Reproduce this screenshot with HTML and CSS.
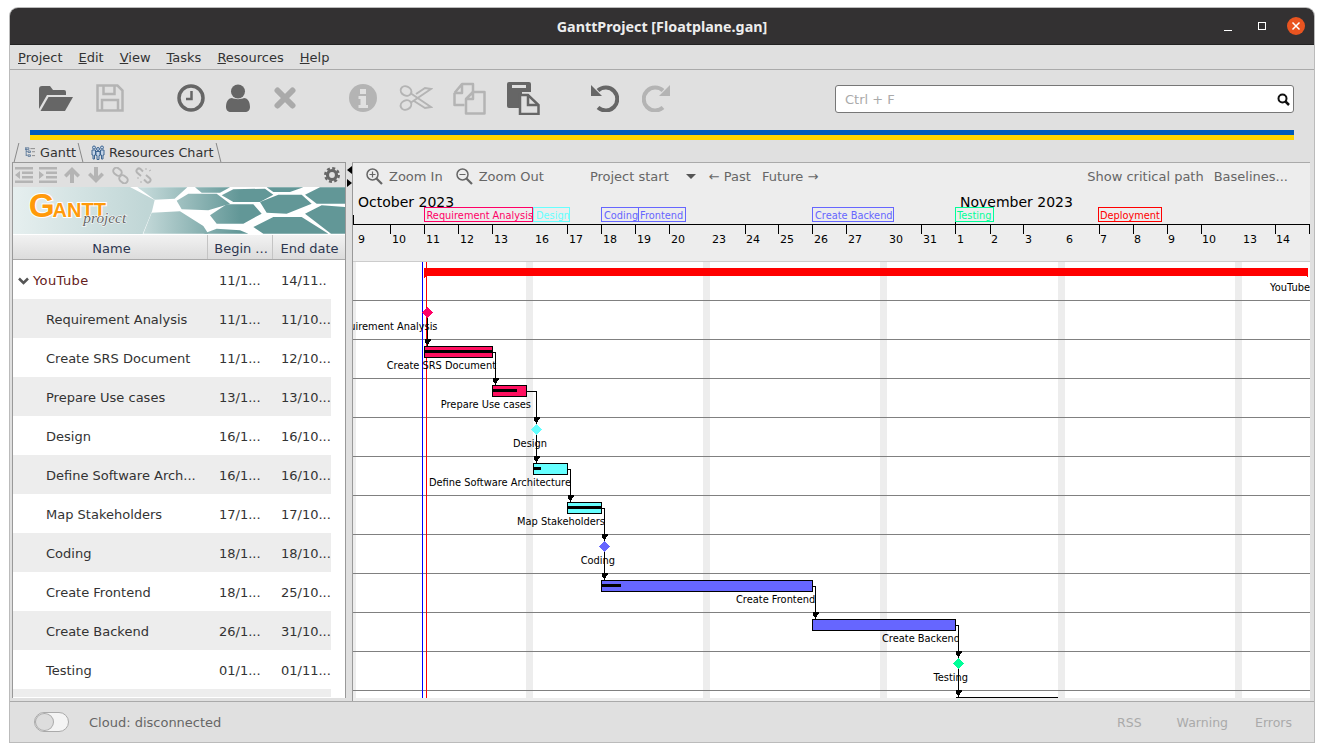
FILE: index.html
```html
<!DOCTYPE html>
<html lang="en">

<head>
    <meta charset="UTF-8">
    <title>GanttProject [Floatplane.gan]</title>
    <link rel="stylesheet" href="styles.css">
</head>

<body>
    <div class="window">
        <div class="titlebar">
            <span></span>
            <span class="title">GanttProject [Floatplane.gan]</span>
            <div class="win-btns">
                <span class="win-min"></span>
                <span class="win-max"></span>
                <svg class="win-close" width="18" height="18" viewBox="0 0 18 18">
                    <circle cx="9" cy="9" r="9" fill="#e95420" />
                    <path d="M5.5 5.5l7 7M12.5 5.5l-7 7" stroke="#fff" stroke-width="1.5" />
                </svg>
            </div>
        </div>

        <div class="menubar">
            <span><u>P</u>roject</span>
            <span><u>E</u>dit</span>
            <span><u>V</u>iew</span>
            <span><u>T</u>asks</span>
            <span><u>R</u>esources</span>
            <span><u>H</u>elp</span>
        </div>

        <div class="toolbar">
            <div class="tools file-tools">
                <div class="tool">
                    <svg width="34" height="25" viewBox="0 0 34 25" fill="#666">
                        <path d="M0 23V3a3 3 0 0 1 3-3h8l3 4h11a2 2 0 0 1 2 2v3H8z" />
                        <path d="M1.500 25L9.500 11H34l-8 14z" />
                    </svg>
                </div>
                <div class="tool">
                    <svg width="28" height="28" viewBox="0 0 28 28" fill="none" stroke="#b4b4b4" stroke-width="2.500">
                        <path d="M1.500 1.500h20l5 5v20h-25z" />
                        <path d="M7.500 2v8h11V2M6 26V16h16v10" />
                    </svg>
                </div>
            </div>
            <div class="tools task-tools">
                <div class="tool">
                    <svg width="28" height="28" viewBox="0 0 28 28" fill="none" stroke="#666">
                        <circle cx="14" cy="14" r="12" stroke-width="3.500" />
                        <path d="M14.500 7v8H9" stroke-width="2.500" />
                    </svg>
                </div>
                <div class="tool">
                    <svg width="24" height="28" viewBox="0 0 24 28" fill="#666">
                        <circle cx="12" cy="7.500" r="7" />
                        <path d="M0 23c0-6 3-9 6-9 2 1.500 10 1.500 12 0 3 0 6 3 6 9 0 3-2 5-5 5H5c-3 0-5-2-5-5z" />
                    </svg>
                </div>
                <div class="tool">
                    <svg width="22" height="22" viewBox="0 0 22 22" stroke="#aaa" stroke-width="6" stroke-linecap="round">
                        <path d="M3.500 3.500l15 15M18.500 3.500l-15 15" />
                    </svg>
                </div>
            </div>
            <div class="tools edit-tools">
                <div class="tool">
                    <svg width="28" height="28" viewBox="0 0 28 28">
                        <circle cx="14" cy="14" r="14" fill="#b4b4b4" />
                        <path d="M11 5h6v5h-6zM9.500 12h7.500v9h2v3H9.500v-3h2v-6h-2z" fill="#e0e0e0" />
                    </svg>
                </div>
                <div class="tool">
                    <svg width="34" height="28" viewBox="0 0 34 28" fill="none" stroke="#b4b4b4" stroke-width="2">
                        <ellipse cx="7" cy="7" rx="5.500" ry="4.500" transform="rotate(25 7 7)" />
                        <ellipse cx="7" cy="21" rx="5.500" ry="4.500" transform="rotate(-25 7 21)" />
                        <path d="M12 9.500L32 23l-6 1-11-7M12 18.500L32 5l-6-1-9 6" />
                    </svg>
                </div>
                <div class="tool">
                    <svg width="33" height="33" viewBox="0 0 33 33" fill="none" stroke="#b4b4b4" stroke-width="2.500" stroke-linejoin="round">
                        <path d="M1.500 11L9 2h11v8M1.500 11v12h10M1.500 11H9V2" />
                        <path d="M13 17l7-7h11.500v21.500H13zM13 17h7v-7" fill="#e0e0e0" />
                    </svg>
                </div>
                <div class="tool">
                    <svg width="33" height="33" viewBox="0 0 33 33">
                        <path d="M2 0h20a2 2 0 0 1 2 2v8H15v16H2a2 2 0 0 1-2-2V2a2 2 0 0 1 2-2z" fill="#666" />
                        <path d="M5 3h14v3H5z" fill="#e0e0e0" />
                        <path d="M13 13h8l10.500 10v9H13z" fill="#e0e0e0" stroke="#666" stroke-width="2.500" />
                        <path d="M21 13v10h10" fill="none" stroke="#666" stroke-width="2.500" />
                    </svg>
                </div>
            </div>
            <div class="tools undo-tools">
                <div class="tool">
                    <svg width="28" height="28" viewBox="0 0 28 28" fill="none">
                        <path d="M7 6.500A11.500 11.500 0 1 1 7 23.500" stroke="#666" stroke-width="4" />
                        <path d="M0 1v11h11z" fill="#666" />
                    </svg>
                </div>
                <div class="tool">
                    <svg width="28" height="28" viewBox="0 0 28 28" fill="none">
                        <path d="M21 6.500A11.500 11.500 0 1 0 21 23.500" stroke="#b4b4b4" stroke-width="4" />
                        <path d="M28 1v11H17z" fill="#b4b4b4" />
                    </svg>
                </div>
            </div>
            <div class="search">
                <span class="search-hint">Ctrl + F</span>
                <svg width="13" height="13" viewBox="0 0 13 13" fill="none" stroke="#111">
                    <circle cx="5.500" cy="5.500" r="4" stroke-width="2" />
                    <path d="M8.500 8.500l3.500 3.500" stroke-width="2.500" />
                </svg>
            </div>
        </div>

        <div class="stripe"></div>

        <div class="tabs">
            <div class="tab">
                <svg width="13" height="13" viewBox="0 0 13 13" fill="none" stroke="#4a6a90">
                    <path d="M1.500 1v10M1.500 5h2M1.500 10h2" />
                    <path d="M0 .500h5v2H0zM4 4.500h3v2H4zM4 9.500h3v2H4z" />
                    <path d="M9 5.500h4M9 10.500h4M7 1.500h6" stroke="#777" />
                </svg>
                Gantt
            </div>
            <div class="tab">
                <svg width="14" height="15" viewBox="0 0 14 15" fill="#c5d5e8" stroke="#3c6490">
                    <circle cx="3" cy="2.500" r="1.500" />
                    <circle cx="11" cy="2.500" r="1.500" />
                    <path d="M1 5h3.500v5H3.500v4H2v-4H1zM9.500 5H13v5h-1v4h-1.500v-4h-1z" />
                    <circle cx="7" cy="4" r="1.500" />
                    <path d="M5 6.500h4v4H8v4H6v-4H5z" />
                </svg>
                Resources Chart
            </div>
        </div>

        <div class="main">
            <div class="left-panel">
                <div class="left-tools">
                    <svg width="18" height="16" viewBox="0 0 18 16" fill="#b4b4b4">
                        <path d="M0 0h18v2.500H0zM0 13.500h18V16H0zM7 4.500h11V7H7zM7 9h11v2.500H7zM5 4v8L0 8z" />
                    </svg>
                    <svg width="18" height="16" viewBox="0 0 18 16" fill="#b4b4b4">
                        <path d="M0 0h18v2.500H0zM0 13.500h18V16H0zM7 4.500h11V7H7zM7 9h11v2.500H7zM0 4v8l5-4z" />
                    </svg>
                    <svg width="16" height="16" viewBox="0 0 16 16" fill="#b4b4b4">
                        <path d="M8 0l8 8-2.500 2.500-3.500-3.500v9H6V7l-3.500 3.500L0 8z" />
                    </svg>
                    <svg width="16" height="16" viewBox="0 0 16 16" fill="#b4b4b4">
                        <path d="M8 16L0 8l2.500-2.500L6 9V0h4v9l3.500-3.500L16 8z" />
                    </svg>
                    <svg width="17" height="17" viewBox="0 0 17 17" fill="none" stroke="#b4b4b4" stroke-width="2">
                        <rect x="1" y="1.500" width="9" height="6.500" rx="3.200" transform="rotate(40 5.500 4.700)" />
                        <rect x="7" y="9" width="9" height="6.500" rx="3.200" transform="rotate(40 11.500 12.200)" />
                    </svg>
                    <svg width="17" height="17" viewBox="0 0 17 17" fill="none" stroke="#b4b4b4" stroke-width="2">
                        <path d="M6 9L2 5.500a2.500 2.500 0 0 1 3.500-3.500L8 4.500M11 8l4 3.500a2.500 2.500 0 0 1-3.500 3.500L9 12.500" />
                        <path d="M2 11h2M6 14v2M11 1v2M14 4l2-1" stroke-width="1" />
                    </svg>
                    <svg class="gear" width="16" height="16" viewBox="0 0 16 16" fill="none" stroke="#666">
                        <circle cx="8" cy="8" r="4.500" stroke-width="3.200" />
                        <circle cx="8" cy="8" r="6.800" stroke-width="2.400" stroke-dasharray="3 2.340" />
                    </svg>
                </div>

                <svg class="logo" width="332" height="47" viewBox="39 145 996 141" preserveAspectRatio="none">
                    <defs>
                        <linearGradient id="logo-bg" gradientUnits="userSpaceOnUse" x1="39" y1="0" x2="440" y2="0">
                            <stop offset="0" stop-color="#e6efef" />
                            <stop offset="1" stop-color="#c0d6d6" />
                        </linearGradient>
                        <linearGradient id="logo-hex" gradientUnits="userSpaceOnUse" x1="430" y1="0" x2="720" y2="0">
                            <stop offset="0" stop-color="#c4d9d9" />
                            <stop offset="1" stop-color="#629797" />
                        </linearGradient>
                    </defs>
                    <rect x="39" y="145" width="996" height="141" fill="url(#logo-bg)" />
                    <path d="M390 145H1035V286H428L456 218 464 184z" fill="#fff" />
                    <g fill="url(#logo-hex)">
                        <path d="M412 146h150l-38 34-60 3zM530 186l35-21h85l40 30-65 20-80-3zM430 285l25-63 85-4 70 44 15 23z" />
                        <path d="M585 146h105l-30 16h-55zM665 170l35-18 95-2 25 18-40 22h-80zM630 230l50-33h80l25 28-55 30h-80zM610 285l40-15 70 5 25 10z" />
                        <path d="M800 146h110l-40 14h-50zM780 190l55-22h70l30 27-75 30-60-3zM760 265l60-30h85l80 50H790zM915 225l50-25 70 5v80h-42zM915 168l45-22h75v49l-85 0z" />
                    </g>
                    <text class="logo-gantt" x="86" y="235"><tspan font-size="100">G</tspan><tspan font-size="60" dx="-6">ANTT</tspan></text>
                    <text class="logo-project" x="250" y="252">project</text>
                </svg>

                <div class="table-head">
                    <div class="col-name">Name</div>
                    <div class="col-begin">Begin ...</div>
                    <div class="col-end">End date</div>
                </div>

                <div class="table-body">
                    <div class="row row-top">
                        <svg class="chevron" width="11" height="8" viewBox="0 0 11 8" fill="none" stroke="#555" stroke-width="2.500">
                            <path d="M1 1.500l4.500 4.500 4.500-4.500" />
                        </svg>
                        <span class="name root">YouTube</span><span class="d1">11/1...</span><span class="d2">14/11..</span>
                    </div>
                    <div class="row shade"><span class="name">Requirement Analysis</span><span class="d1">11/1...</span><span class="d2">11/10...</span></div>
                    <div class="row"><span class="name">Create SRS Document</span><span class="d1">11/1...</span><span class="d2">12/10...</span></div>
                    <div class="row shade"><span class="name">Prepare Use cases</span><span class="d1">13/1...</span><span class="d2">13/10...</span></div>
                    <div class="row"><span class="name">Design</span><span class="d1">16/1...</span><span class="d2">16/10...</span></div>
                    <div class="row shade"><span class="name">Define Software Arch...</span><span class="d1">16/1...</span><span class="d2">16/10...</span></div>
                    <div class="row"><span class="name">Map Stakeholders</span><span class="d1">17/1...</span><span class="d2">17/10...</span></div>
                    <div class="row shade"><span class="name">Coding</span><span class="d1">18/1...</span><span class="d2">18/10...</span></div>
                    <div class="row"><span class="name">Create Frontend</span><span class="d1">18/1...</span><span class="d2">25/10...</span></div>
                    <div class="row shade"><span class="name">Create Backend</span><span class="d1">26/1...</span><span class="d2">31/10...</span></div>
                    <div class="row"><span class="name">Testing</span><span class="d1">01/1...</span><span class="d2">01/11...</span></div>
                    <div class="row-last"></div>
                </div>
            </div>

            <div class="splitter">
                <span class="arrow-left"></span>
                <span class="arrow-right"></span>
            </div>

            <div class="gantt">
                <div class="gantt-tools">
                    <span class="gt-item gt-zoom">
                        <svg width="17" height="17" viewBox="0 0 17 17" fill="none" stroke="#666" stroke-width="1.500">
                            <circle cx="6.500" cy="6.500" r="5.500" />
                            <path d="M10.500 10.500l5.500 5.500" stroke-width="2.200" />
                            <path d="M3.500 6.500h6M6.500 3.500v6" stroke-width="1.200" />
                        </svg>
                        Zoom In
                    </span>
                    <span class="gt-item gt-zoom">
                        <svg width="17" height="17" viewBox="0 0 17 17" fill="none" stroke="#666" stroke-width="1.500">
                            <circle cx="6.500" cy="6.500" r="5.500" />
                            <path d="M10.500 10.500l5.500 5.500" stroke-width="2.200" />
                            <path d="M3.500 6.500h6" stroke-width="1.200" />
                        </svg>
                        Zoom Out
                    </span>
                    <span class="gt-item gt-start">Project start</span>
                    <span class="gt-caret"></span>
                    <span class="gt-item gt-past">← Past</span>
                    <span class="gt-item gt-future">Future →</span>
                    <span class="gt-item gt-critical">Show critical path</span>
                    <span class="gt-item gt-base">Baselines...</span>
                </div>

                <svg class="chart" width="957" height="510" viewBox="353 190 957 510">
                    <defs>
                        <clipPath id="clip-front"><rect x="700" y="590" width="116" height="20" /></clipPath>
                        <clipPath id="clip-back"><rect x="860" y="630" width="99" height="20" /></clipPath>
                    </defs>

                    <!-- body -->
                    <rect x="353" y="262" width="957" height="438" fill="#fff" />
                    <g fill="#ededed">
                        <rect x="353" y="262" width="3" height="436" />
                        <rect x="526" y="262" width="7" height="436" />
                        <rect x="703" y="262" width="7" height="436" />
                        <rect x="880" y="262" width="7" height="436" />
                        <rect x="1058" y="262" width="7" height="436" />
                        <rect x="1235" y="262" width="7" height="436" />
                        <rect x="353" y="698" width="957" height="2" />
                    </g>
                    <path class="thin" stroke="#ccc" d="M353 261.500h957" />
                    <path class="thin" stroke="#808080" d="M353 300.500h957M353 339.500h957M353 378.500h957M353 417.500h957M353 456.500h957M353 495.500h957M353 534.500h957M353 573.500h957M353 612.500h957M353 651.500h957M353 690.500h957" />

                    <!-- timeline header -->
                    <text class="month" x="358" y="207">October 2023</text>
                    <text class="month" x="960" y="207">November 2023</text>
                    <path class="thin" stroke="#000" d="M353 224.500h957M353.500 215v10M390.500 224v10M424.500 224v10M458.500 224v10M492.500 224v10M567.500 224v10M601.500 224v10M635.500 224v10M669.500 224v10M745.500 224v10M778.500 224v10M812.500 224v10M846.500 224v10M921.500 224v10M955.500 207v27M990.500 224v10M1023.500 224v10M1099.500 224v10M1133.500 224v10M1167.500 224v10M1201.500 224v10M1275.500 224v10M1309.500 224v10" />
                    <g class="days">
                        <text x="358" y="243">9</text><text x="392" y="243">10</text><text x="426" y="243">11</text><text x="460" y="243">12</text><text x="494" y="243">13</text>
                        <text x="535" y="243">16</text><text x="569" y="243">17</text><text x="603" y="243">18</text><text x="637" y="243">19</text><text x="671" y="243">20</text>
                        <text x="712" y="243">23</text><text x="746" y="243">24</text><text x="780" y="243">25</text><text x="814" y="243">26</text><text x="848" y="243">27</text>
                        <text x="889" y="243">30</text><text x="923" y="243">31</text><text x="957" y="243">1</text><text x="991" y="243">2</text><text x="1025" y="243">3</text>
                        <text x="1066" y="243">6</text><text x="1100" y="243">7</text><text x="1134" y="243">8</text><text x="1168" y="243">9</text><text x="1202" y="243">10</text>
                        <text x="1243" y="243">13</text><text x="1276" y="243">14</text>
                    </g>

                    <!-- milestones and phases on the timeline -->
                    <g class="flags">
                        <rect x="424.500" y="207.500" width="108" height="14" stroke="#f06" /><text x="426.500" y="219" fill="#f06">Requirement Analysis</text>
                        <rect x="533.500" y="207.500" width="36" height="14" stroke="#6ff" /><text x="536" y="219" fill="#6ff">Design</text>
                        <rect x="601.500" y="207.500" width="37" height="14" stroke="#66f" /><text x="604" y="219" fill="#66f">Coding</text>
                        <rect x="638.500" y="207.500" width="47" height="14" stroke="#66f" /><text x="640" y="219" fill="#66f">Frontend</text>
                        <rect x="812.500" y="207.500" width="81" height="14" stroke="#66f" /><text x="815" y="219" fill="#66f">Create Backend</text>
                        <rect x="955.500" y="207.500" width="38" height="14" stroke="#0f9" /><text x="957" y="219" fill="#0f9">Testing</text>
                        <rect x="1098.500" y="207.500" width="63" height="14" stroke="#f00" /><text x="1100" y="219" fill="#f00">Deployment</text>
                    </g>

                    <!-- today and project start -->
                    <rect class="crisp" x="422" y="262" width="1" height="436" fill="#0000ff" />
                    <rect class="crisp" x="426" y="262" width="1" height="436" fill="#ff0000" />

                    <!-- summary task -->
                    <path class="crisp" fill="#f00" d="M424 268h884v10l-2-2H426l-2 2z" />

                    <!-- labels -->
                    <g class="labels">
                        <text x="1310" y="291" text-anchor="end">YouTube</text>
                        <text x="437.500" y="330" text-anchor="end">Requirement Analysis</text>
                        <text x="496" y="369" text-anchor="end">Create SRS Document</text>
                        <text x="531" y="408" text-anchor="end">Prepare Use cases</text>
                        <text x="547" y="447" text-anchor="end">Design</text>
                        <text x="571" y="486" text-anchor="end">Define Software Architecture</text>
                        <text x="605" y="525" text-anchor="end">Map Stakeholders</text>
                        <text x="615" y="564" text-anchor="end">Coding</text>
                        <text x="736" y="603" clip-path="url(#clip-front)">Create Frontend</text>
                        <text x="882" y="642" clip-path="url(#clip-back)">Create Backend</text>
                        <text x="968" y="681" text-anchor="end">Testing</text>
                    </g>

                    <!-- links -->
                    <path class="thin" stroke="#000" fill="none" d="M427.500 312v34M493 352.500h2.500v32M527 391.500h9.500v37M536.500 429v34M568 469.500h2.500v33M602 508.500h2.500v37M604.500 546v34M813 586.500h2.500v33M956 625.500h2.500v38M958.500 663v34" />
                    <path class="crisp" fill="#000" d="M424.500 339h6v2l-2 3h-2l-2-3zM492.500 378h6v2l-2 3h-2l-2-3zM533.500 417h6v2l-2 3h-2l-2-3zM533.500 456h6v2l-2 3h-2l-2-3zM567.500 495h6v2l-2 3h-2l-2-3zM601.500 534h6v2l-2 3h-2l-2-3zM601.500 573h6v2l-2 3h-2l-2-3zM812.500 612h6v2l-2 3h-2l-2-3zM955.500 651h6v2l-2 3h-2l-2-3zM955.500 690h6v2l-2 3h-2l-2-3z" />

                    <!-- tasks -->
                    <g class="bars">
                        <rect x="424.500" y="346.500" width="68" height="11" fill="#ff0f5f" />
                        <rect x="492.500" y="385.500" width="34" height="11" fill="#ff0f5f" />
                        <rect x="533.500" y="463.500" width="34" height="11" fill="#6ff" />
                        <rect x="567.500" y="502.500" width="34" height="11" fill="#6ff" />
                        <rect x="601.500" y="580.500" width="211" height="11" fill="#66f" />
                        <rect x="812.500" y="619.500" width="143" height="11" fill="#66f" />
                    </g>
                    <path class="crisp" fill="#000" d="M425 350h67v3h-67zM493 389h24v3h-24zM534 467h7v3h-7zM568 506h33v3h-33zM602 584h19v3h-19zM956 697h102v1H956z" />
                    <g class="crisp">
                        <path fill="#f06" d="M427.500 307l5.500 5.500-5.500 5.500-5.500-5.500z" />
                        <path fill="#6ff" d="M536.500 424l5.500 5.500-5.500 5.500-5.500-5.500z" />
                        <path fill="#66f" d="M604.500 541l5.500 5.500-5.500 5.500-5.500-5.500z" />
                        <path fill="#0f9" d="M958.500 658l5.500 5.500-5.500 5.500-5.500-5.500z" />
                    </g>
                </svg>
            </div>
        </div>

        <div class="statusbar">
            <span class="toggle"><span class="knob"></span></span>
            <span class="cloud">Cloud: disconnected</span>
            <span class="st-link st-rss">RSS</span>
            <span class="st-link st-warn">Warning</span>
            <span class="st-link st-errors">Errors</span>
        </div>
    </div>
</body>

</html>
```

FILE: styles.css
```css
* {
    margin: 0;
    padding: 0;
    box-sizing: border-box;
}

body {
    background: #fff;
    padding: 8px 10px 0;
    font-family: "DejaVu Sans", sans-serif;
    font-size: 13px;
    color: #333;
    overflow: hidden;
}

.window {
    width: 1304px;
    height: 735px;
    display: flex;
    flex-direction: column;
    background: #e0e0e0;
    border-radius: 8px 8px 0 0;
    overflow: hidden;
    box-shadow: 0 0 0 1px #bbb;
}

/* title bar */
.titlebar {
    height: 37px;
    flex: none;
    display: grid;
    grid-template-columns: 1fr auto 1fr;
    align-items: center;
    background: #333132;
    border-bottom: 1px solid #222;
}

.title {
    font-family: "Noto Sans", sans-serif;
    font-weight: 700;
    font-size: 14.300px;
    color: #ededed;
}

.win-btns {
    display: flex;
    justify-content: flex-end;
    align-items: center;
    padding-right: 9px;
}

.win-min {
    width: 8px;
    height: 1px;
    margin: 9px 26px 0 0;
    background: #fff;
}

.win-max {
    width: 8px;
    height: 8px;
    margin: -1px 21px 0 0;
    border: 1px solid #fff;
}

.win-close {
    margin-top: -1px;
}

/* menu */
.menubar {
    height: 25px;
    flex: none;
    display: flex;
    align-items: center;
    gap: 16px;
    padding: 1px 0 0 8px;
    border-bottom: 1px solid #aaa;
}

/* main toolbar */
.toolbar {
    height: 60px;
    flex: none;
    display: flex;
    align-items: center;
    padding: 0 0 2px 19px;
}

.tools {
    display: flex;
    align-items: center;
    margin-top: -2px;
}

.tool {
    height: 34px;
    display: flex;
    align-items: center;
    justify-content: center;
}

.file-tools .tool {
    width: 54px;
}

.task-tools {
    margin-left: 30px;
}

.task-tools .tool {
    width: 47px;
}

.edit-tools {
    margin-left: 28px;
}

.edit-tools .tool {
    width: 53.500px;
}

.undo-tools {
    margin-left: 29px;
}

.undo-tools .tool {
    width: 51px;
}

.search {
    width: 459px;
    height: 28px;
    margin-left: 154px;
    display: flex;
    align-items: center;
    justify-content: space-between;
    padding: 0 3px 0 9px;
    background: #fff;
    border: 1px solid #777;
    border-radius: 3px;
}

.search-hint {
    color: #aaa;
}

.stripe {
    height: 10px;
    flex: none;
    margin: 0 20px;
    background: linear-gradient(#005bbb 50%, #ffd500 50%);
}

/* tabs */
.tabs {
    height: 22px;
    flex: none;
    display: flex;
    align-items: flex-end;
    padding-left: 5px;
    font-size: 12.800px;
}

.tab {
    height: 20px;
    display: flex;
    align-items: center;
    gap: 5px;
    padding: 0 7px 0 10px;
    position: relative;
    white-space: nowrap;
}

.tab::after {
    content: "";
    position: absolute;
    top: 1px;
    bottom: 0;
    right: 2px;
    width: 1px;
    background: #888;
    transform: skewX(14deg);
}

.tab:first-child::before {
    content: "";
    position: absolute;
    top: 1px;
    bottom: 0;
    left: 1px;
    width: 1px;
    background: #888;
    transform: skewX(-14deg);
}

.tab:first-child {
    width: 68px;
}

.tab:last-child {
    width: 138px;
    padding-left: 8px;
    gap: 4px;
}

/* panels */
.main {
    flex: 1;
    min-height: 0;
    display: flex;
    padding-left: 2px;
    border-bottom: 1px solid #aaa;
}

.left-panel {
    width: 334px;
    flex: none;
    display: flex;
    flex-direction: column;
    background: #fff;
    border: 1px solid #999;
    border-bottom: 0;
    margin-bottom: 3px;
}

.left-tools {
    height: 24px;
    flex: none;
    display: flex;
    align-items: center;
    gap: 6px;
    padding-left: 2px;
    background: #e0e0e0;
}

.left-tools svg:nth-child(2) {
    margin-right: 1px;
}

.left-tools svg:nth-child(3),
.left-tools svg:nth-child(4) {
    margin-right: 2px;
}

.gear {
    margin-left: auto;
    margin-right: 5px;
}

.logo {
    display: block;
    flex: none;
}

.logo-gantt {
    font-family: "Liberation Sans", sans-serif;
    font-weight: 700;
    fill: #ff9a0a;
    stroke: #fff;
    stroke-width: 6px;
    paint-order: stroke;
}

.logo-project {
    font-family: "Liberation Serif", serif;
    font-style: italic;
    font-size: 46px;
    fill: #666;
    stroke: #fff;
    stroke-width: 3px;
    paint-order: stroke;
}

.table-head {
    height: 26px;
    flex: none;
    display: flex;
    background: linear-gradient(#f2f2f2, #dcdcdc);
    border-top: 1px solid #fff;
    border-bottom: 1px solid #aaa;
    padding-right: 1px;
    color: #2c3650;
}

.table-head div {
    display: flex;
    align-items: center;
    justify-content: center;
    padding-top: 2px;
}

.table-head .col-name {
    width: 195px;
    padding-left: 3px;
    border-right: 1px solid #c4c4c4;
}

.table-head .col-begin {
    width: 65px;
    padding-left: 2px;
    border-right: 1px solid #c4c4c4;
}

.table-head .col-end {
    flex: 1;
    padding-left: 2px;
}

.table-body {
    flex: 1;
    min-height: 0;
    width: 318px;
    overflow: hidden;
}

.row {
    height: 39px;
    display: flex;
    align-items: center;
    padding: 2px 0 0 33px;
    white-space: nowrap;
}

.row-top {
    padding-left: 5px;
}

.chevron {
    margin-right: 4px;
}

.shade,
.row-last {
    background: #ededed;
}

.row-last {
    height: 8px;
}

.name {
    width: 173px;
    flex: none;
}

.root {
    width: 186px;
    margin-left: 0;
    color: #642020;
    letter-spacing: 0.400px;
}

.d1 {
    width: 62px;
    flex: none;
}

.splitter {
    width: 6px;
    flex: none;
    display: flex;
    flex-direction: column;
    align-items: center;
    gap: 5px;
    padding-top: 4px;
}

.arrow-left,
.arrow-right {
    width: 0;
    height: 0;
    border-top: 4px solid transparent;
    border-bottom: 4px solid transparent;
}

.arrow-left {
    border-right: 5px solid #000;
}

.arrow-right {
    border-left: 5px solid #000;
}

/* chart side */
.gantt {
    width: 958px;
    flex: none;
    display: flex;
    flex-direction: column;
    background: #ededed;
    border-top: 1px solid #aaa;
    border-left: 1px solid #999;
    overflow: hidden;
}

.gantt-tools {
    height: 27px;
    flex: none;
    display: flex;
    align-items: center;
    color: #666;
    padding-left: 13px;
}

.gt-item {
    display: flex;
    align-items: center;
    gap: 6px;
    white-space: nowrap;
}

.gt-zoom + .gt-zoom {
    margin-left: 13px;
}

.gt-start {
    margin-left: 46px;
}

.gt-caret {
    width: 0;
    height: 0;
    margin-left: 17px;
    border-left: 5px solid transparent;
    border-right: 5px solid transparent;
    border-top: 5px solid #555;
}

.gt-past {
    margin-left: 13px;
}

.gt-future {
    margin-left: 11px;
}

.gt-critical {
    margin-left: auto;
}

.gt-base {
    margin-left: 10px;
    margin-right: 22px;
}

.chart {
    display: block;
    flex: none;
}

.thin,
.crisp,
.bars rect,
.flags rect {
    shape-rendering: crispEdges;
}

.month {
    font-size: 14px;
    fill: #000;
}

.days text {
    font-size: 11px;
    fill: #000;
}

.flags rect {
    fill: none;
}

.flags text {
    font-size: 9.800px;
}

.labels text {
    font-size: 9.850px;
    fill: #000;
}

.bars rect {
    stroke: #000;
}

/* status bar */
.statusbar {
    height: 41px;
    flex: none;
    display: flex;
    align-items: center;
    padding-left: 24px;
    color: #666;
    border-bottom: 1px solid #bbb;
}

.toggle {
    width: 35px;
    height: 20px;
    border: 1px solid #aaa;
    border-radius: 10px;
    background: #f4f4f4;
}

.knob {
    display: block;
    width: 19px;
    height: 18px;
    border-radius: 50%;
    border: 1px solid #aaa;
    background: #ddd;
}

.cloud {
    margin-left: 20px;
}

.st-link {
    color: #aaa;
    font-size: 12.500px;
}

.st-rss {
    margin-left: auto;
}

.st-warn {
    margin-left: 35px;
}

.st-errors {
    margin-left: 27px;
    margin-right: 22px;
}
```
